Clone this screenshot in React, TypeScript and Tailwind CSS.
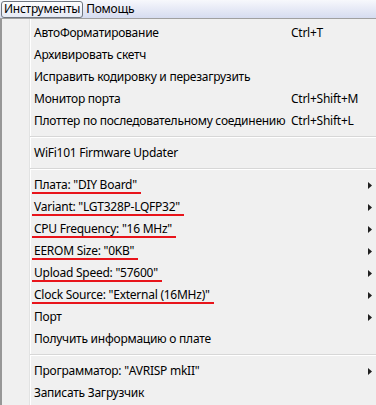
import React from "react";

type Item =
  | { type: "sep" }
  | { type: "item"; label: string; shortcut?: string; arrow?: boolean; red?: boolean };

const items: Item[] = [
  { type: "item", label: "АвтоФорматирование", shortcut: "Ctrl+T" },
  { type: "item", label: "Архивировать скетч" },
  { type: "item", label: "Исправить кодировку и перезагрузить" },
  { type: "item", label: "Монитор порта", shortcut: "Ctrl+Shift+M" },
  { type: "item", label: "Плоттер по последовательному соединению", shortcut: "Ctrl+Shift+L" },
  { type: "sep" },
  { type: "item", label: "WiFi101 Firmware Updater" },
  { type: "sep" },
  { type: "item", label: 'Плата: "DIY Board"', arrow: true, red: true },
  { type: "item", label: 'Variant: "LGT328P-LQFP32"', arrow: true, red: true },
  { type: "item", label: 'CPU Frequency: "16 MHz"', arrow: true, red: true },
  { type: "item", label: 'EEROM Size: "0KB"', arrow: true, red: true },
  { type: "item", label: 'Upload Speed: "57600"', arrow: true, red: true },
  { type: "item", label: 'Clock Source: "External (16MHz)"', arrow: true, red: true },
  { type: "item", label: "Порт", arrow: true },
  { type: "item", label: "Получить информацию о плате" },
  { type: "sep" },
  { type: "item", label: 'Программатор: "AVRISP mkII"', arrow: true },
  { type: "item", label: "Записать Загрузчик" },
];

function Arrow() {
  return (
    <svg width="4" height="7" viewBox="0 0 4 7" className="block">
      <path d="M0 0 L4 3.5 L0 7 Z" fill="#202020" />
    </svg>
  );
}

export default function App() {
  return (
    <div
      className="w-[376px] h-[405px] bg-[#f0f0f0] text-black text-[12px] tracking-[-0.25px] overflow-hidden flex flex-col"
      style={{ fontFamily: '"Noto Sans", "DejaVu Sans", sans-serif' }}
    >
      <div className="h-[19px] shrink-0 bg-gradient-to-b from-[#f7f8fc] to-[#d6dcf0] border-b border-[#a0a0a0] flex items-center">
        <div className="ml-[1px] h-[17px] px-[2px] border border-[#6f7680] rounded-[3px] bg-gradient-to-b from-[#fdfdfe] to-[#e6eaf5] flex items-center leading-none">
          Инструменты
        </div>
        <div className="ml-[3px] leading-none">Помощь</div>
      </div>
      <div className="flex-1 flex border-l-2 border-[#979797] bg-[#f0f0f0]">
        <div className="w-[28px] shrink-0 border-r border-[#e2e3e3] shadow-[1px_0_0_#ffffff]" />
        <div className="flex-1 flex flex-col pt-[3px]">
          {items.map((it, i) =>
            it.type === "sep" ? (
              <div key={i} className="h-[10px] flex items-center">
                <div className="w-full h-[2px] border-t border-[#d7d7d7] border-b border-b-white" />
              </div>
            ) : (
              <div key={i} className="h-[22px] flex items-center">
                <div className="pl-[4px] w-[261px] shrink-0 whitespace-nowrap">
                  {it.red ? (
                    <span className="inline-block border-b-2 border-[#e8141b] leading-[14px] pr-[4px] -ml-[2px] pl-[2px]">
                      {it.label}
                    </span>
                  ) : (
                    it.label
                  )}
                </div>
                <div className="flex-1 whitespace-nowrap">{it.shortcut}</div>
                <div className="w-[8px] shrink-0">{it.arrow && <Arrow />}</div>
              </div>
            )
          )}
        </div>
      </div>
    </div>
  );
}
